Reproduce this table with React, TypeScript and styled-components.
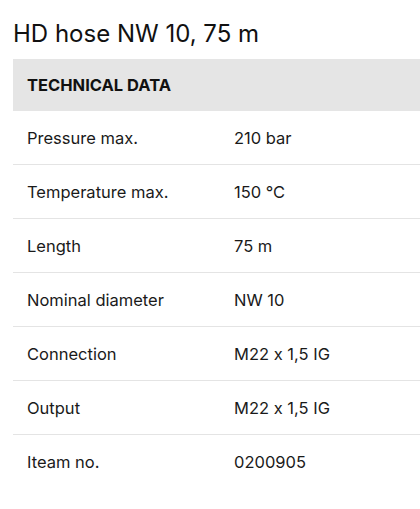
import React from "react";
import styled, { createGlobalStyle } from "styled-components";

const Global = createGlobalStyle`
  html, body { margin: 0; padding: 0; background: #fff; }
  body {
    font-family: Inter, "Liberation Sans", sans-serif;
    color: #1a1a1a;
    font-feature-settings: "calt" 0;
  }
`;

const Page = styled.div`
  padding: 18px 0 0 13px;
`;

const Title = styled.h1`
  margin: 0 0 9px 0;
  font-size: 24px;
  line-height: 32px;
  font-weight: 400;
  color: #111;
`;

const Table = styled.div`
  display: flex;
  flex-direction: column;
`;

const Header = styled.div`
  height: 52px;
  background: #e5e5e5;
  display: flex;
  align-items: center;
  padding-left: 14px;
  font-size: 16.5px;
  font-weight: 700;
  color: #111;
`;

const Row = styled.div<{ $last?: boolean }>`
  height: 53px;
  display: grid;
  grid-template-columns: 207px 1fr;
  align-items: center;
  padding-left: 14px;
  border-bottom: 1px solid ${(p) => (p.$last ? "transparent" : "#e4e4e4")};
  font-size: 16.5px;
  color: #1a1a1a;
`;

const Cell = styled.span``;

const data: [string, string][] = [
  ["Pressure max.", "210 bar"],
  ["Temperature max.", "150 °C"],
  ["Length", "75 m"],
  ["Nominal diameter", "NW 10"],
  ["Connection", "M22 x 1,5 IG"],
  ["Output", "M22 x 1,5 IG"],
  ["Iteam no.", "0200905"],
];

export default function App() {
  return (
    <Page>
      <Global />
      <Title>HD hose NW 10, 75 m</Title>
      <Table>
        <Header>TECHNICAL DATA</Header>
        {data.map(([k, v], i) => (
          <Row key={k} $last={i === data.length - 1}>
            <Cell>{k}</Cell>
            <Cell>{v}</Cell>
          </Row>
        ))}
      </Table>
    </Page>
  );
}
